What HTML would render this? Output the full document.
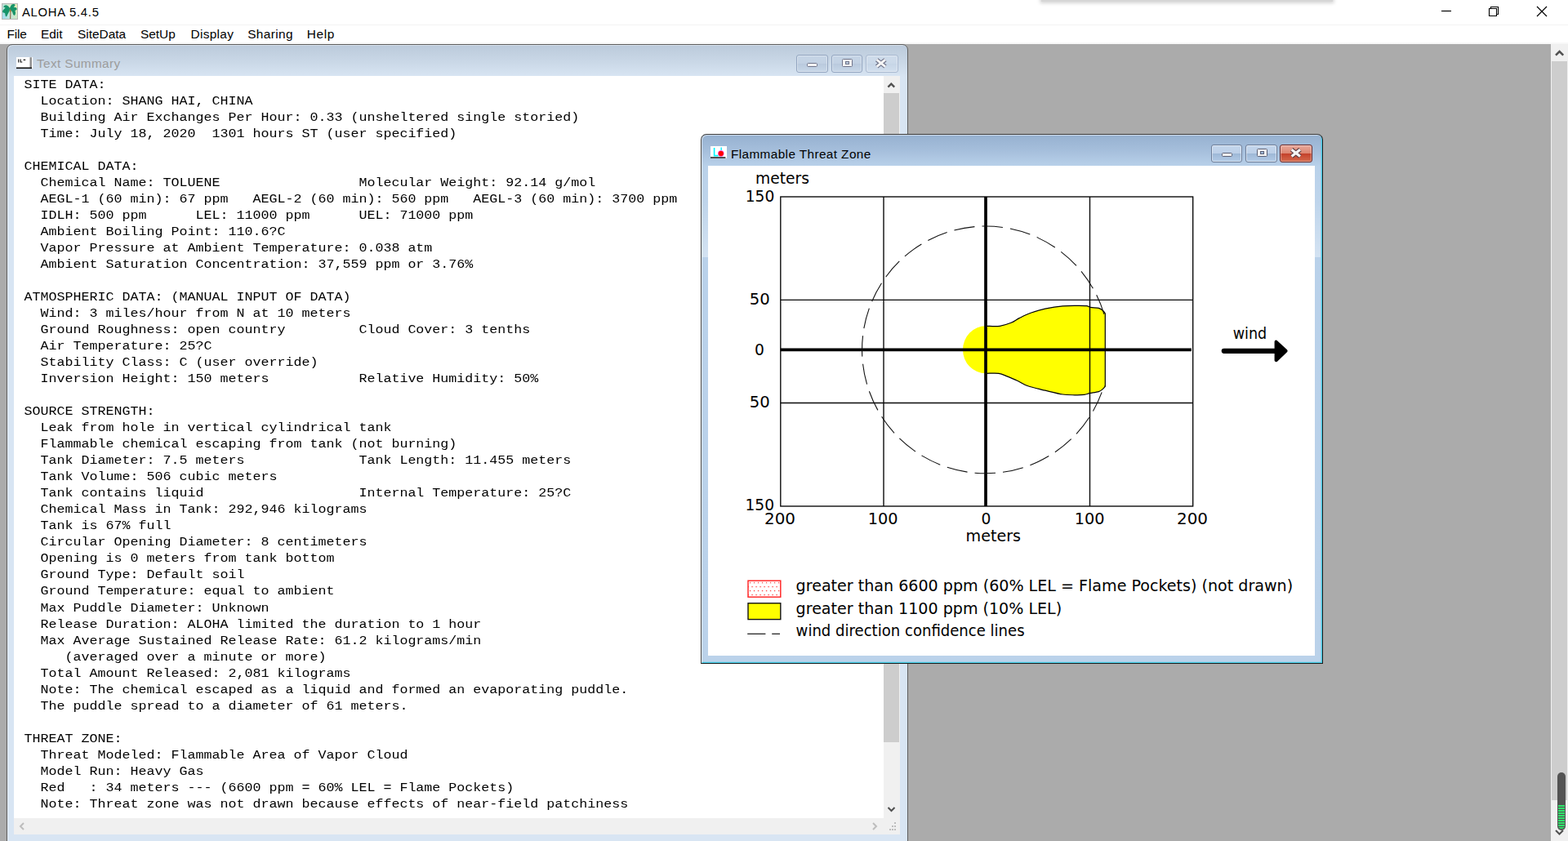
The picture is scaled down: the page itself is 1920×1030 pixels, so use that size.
<!DOCTYPE html>
<html lang="en">
<head>
<meta charset="utf-8">
<title>ALOHA 5.4.5</title>
<style>
html,body{margin:0;padding:0;}
body{width:1920px;height:1030px;overflow:hidden;background:#fff;position:relative;font-family:"Liberation Sans",sans-serif;color:#000;}
.abs{position:absolute;}
#titlebar{left:0;top:0;width:1920px;height:30px;background:#fff;}
#apptitle{left:27px;top:4.5px;font-size:14.8px;line-height:20px;white-space:nowrap;letter-spacing:0.75px;}
#menubar{left:0;top:30px;width:1920px;height:24px;background:linear-gradient(#fff 0,#fff 20px,#f1f1f1 24px);border-top:1px solid #f3f3f3;box-sizing:border-box;}
#menubar span{position:absolute;top:0.6px;font-size:15.4px;line-height:20px;white-space:nowrap;}
#mdi{left:0;top:54px;width:1899px;height:976px;background:#ababab;}
#mainsb{left:1899px;top:54px;width:21px;height:976px;background:#f0f0f0;}
/* text summary window */
#tswin{left:7.5px;top:54px;width:1104.5px;height:990px;box-sizing:border-box;border:1.4px solid #5e5e5e;border-top-width:1.2px;border-radius:7px 7px 0 0;box-shadow:inset 1px 1px 0 rgba(255,255,255,.4);background:linear-gradient(#bbcadb 0px,#c9d7e6 20px,#d8e5f3 39px,#d8e5f3 100%);}
#tstitle{left:36.5px;top:13px;font-size:15.3px;line-height:20px;color:#9c9c9c;white-space:nowrap;letter-spacing:0.4px;}
#tscontent{left:8.6px;top:37.8px;width:1065.2px;height:909px;background:#fff;overflow:hidden;}
#tstext{position:absolute;left:12.5px;top:1px;margin:0;font-family:"Liberation Mono",monospace;font-size:16.667px;line-height:22.01px;white-space:pre;color:#000;transform:scaleY(0.90909);transform-origin:0 0;}
#tsvsb{left:1073.8px;top:37.8px;width:19.5px;height:909px;background:#f0f0f0;}
#tshsb{left:8.6px;top:946.8px;width:1084.7px;height:20px;background:#f0f0f0;}
.cbtn{position:absolute;box-sizing:border-box;border-radius:3px;}
/* flammable window */
#fzwin{left:857.5px;top:164px;width:762.5px;height:649px;box-sizing:border-box;border:1.5px solid #1c1c1c;border-top:1.2px solid #3c3c3c;border-left-color:#444;border-radius:7px 7px 0 0;background:linear-gradient(#96b1d0 0px,#a6bfdc 20px,#b9d1ea 39px,#bbd2ea 100%);box-shadow:inset 1px 1px 0 rgba(255,255,255,.55),inset -1.3px -1.3px 0 #46cde6;}
#fztitle{left:36.4px;top:13.5px;font-size:15.3px;line-height:20px;white-space:nowrap;letter-spacing:0.42px;}
#fzcontent{left:8.5px;top:37.8px;width:742.5px;height:600.2px;background:#fff;overflow:hidden;}
</style>
</head>
<body>
<div id="titlebar" class="abs">
  <svg class="abs" style="left:2px;top:4px" width="20" height="20" viewBox="0 0 20 20">
    <defs>
      <linearGradient id="icT" x1="0" y1="0" x2="1" y2="0"><stop offset="0" stop-color="#b4e0dc"/><stop offset="0.55" stop-color="#d6ecc8"/><stop offset="1" stop-color="#e8efb4"/></linearGradient>
      <linearGradient id="icB" x1="0" y1="0" x2="1" y2="0"><stop offset="0" stop-color="#9ddaf2"/><stop offset="0.5" stop-color="#bfe6dc"/><stop offset="1" stop-color="#d0e9c4"/></linearGradient>
      <linearGradient id="icM" x1="0" y1="0" x2="0" y2="1"><stop offset="0.3" stop-color="#000"/><stop offset="0.8" stop-color="#fff"/></linearGradient>
      <mask id="icMask"><rect x="0" y="0" width="20" height="20" fill="url(#icM)"/></mask>
    </defs>
    <rect x="0" y="0" width="20" height="20" fill="url(#icT)"/>
    <rect x="0" y="0" width="20" height="20" fill="url(#icB)" mask="url(#icMask)"/>
    <rect x="0.5" y="0.5" width="19" height="19" fill="none" stroke="#b9b9b9" stroke-width="1"/>
    <path d="M10.4 9 L10 19 L11.2 19 L11.5 9 Z" fill="#8f6a4c"/>
    <path d="M9.3 6.2 C9.3 5.4 11.6 5.4 11.6 6.4 L11.4 10.5 L9.8 10.5 Z" fill="#b07235"/>
    <path d="M10 6.2 C9.4 5 8.2 3.4 7.2 3 C6 2 4.6 2 3.6 2.8 C2.8 3.4 2.2 4 2.1 4.6 C3.2 4.8 4 5.2 4.6 5.8 C3.4 6.6 1.8 8.2 1 9.8 C1.2 10.6 1.4 11.2 1.6 11.6 C2.6 11.4 3.4 11.6 4.2 12.2 C4.2 13.6 4.6 15.4 5.2 16.4 C5.8 16.2 6.2 16 6.6 15.6 C7 14 8 12.4 8.8 11 C9.2 10.2 9.6 9.4 9.8 8.8 Z" fill="#17946a"/>
    <path d="M10 6 C10.6 4.4 11.4 2.6 12.4 1.6 C13.6 1 15 0.9 15.9 1.3 C16.5 1.9 16.5 2.6 16.3 3 C15.7 3.6 15.1 4.2 14.6 4.7 C16 4.8 17.2 5 18.1 5.5 C18.6 6.2 18.8 7 18.6 7.7 C17.8 8.2 17 8.7 16.4 9 C16.9 10.2 17.1 11.2 17 12.2 C16.8 13.4 16.4 14.4 15.8 15.1 C15.1 14.7 14.5 14.1 14 13.4 C13.6 12 13 10.6 12.3 9.6 C11.9 9.1 11.5 8.8 11.1 8.5 Z" fill="#17946a"/>
  </svg>
  <div id="apptitle" class="abs">ALOHA 5.4.5</div>
  <svg class="abs" style="left:1750px;top:0" width="170" height="30" viewBox="0 0 170 30">
    <path d="M15 13.5 H27" stroke="#000" stroke-width="1.2" fill="none"/>
    <path d="M73.5 10.5 H82.5 V19.5 H73.5 Z M75.5 10.5 V8.5 H84.5 V17.5 H82.5" stroke="#000" stroke-width="1.1" fill="none"/>
    <path d="M132 8 L144 20 M144 8 L132 20" stroke="#000" stroke-width="1.2" fill="none"/>
  </svg>
  <div class="abs" style="left:1275px;top:-6px;width:357px;height:7.7px;background:#d6d6d6;box-shadow:0 0.5px 4px 1.5px rgba(0,0,0,0.17);"></div>
</div>
<div id="menubar" class="abs">
  <span style="left:8.6px;letter-spacing:-0.2px">File</span>
  <span style="left:50px">Edit</span>
  <span style="left:95px">SiteData</span>
  <span style="left:172px">SetUp</span>
  <span style="left:233.6px;letter-spacing:0.3px">Display</span>
  <span style="left:303.2px;letter-spacing:0.4px">Sharing</span>
  <span style="left:375.8px;letter-spacing:0.6px">Help</span>
</div>
<div id="mdi" class="abs"></div>
<div id="mainsb" class="abs">
  <div class="abs" style="left:1px;top:21px;width:19px;height:905px;background:#cdcdcd;"></div>
  <svg class="abs" style="left:0;top:0" width="21" height="21" viewBox="0 0 21 21"><path d="M6 13.6 L10.6 9 L15.2 13.6" stroke="#505050" stroke-width="2.5" fill="none"/></svg>
  <svg class="abs" style="left:0;top:955px" width="21" height="21" viewBox="0 0 21 21"><path d="M6 8 L10.5 12.5 L15 8" stroke="#505050" stroke-width="2" fill="none"/></svg>
  <div class="abs" style="left:8px;top:892px;width:10px;height:71px;background:#535353;border-radius:5px;"></div>
  <div class="abs" style="left:9px;top:932px;width:8px;height:29px;background:repeating-linear-gradient(#30e36b 0px,#30e36b 2px,#535353 2px,#535353 3px);border-radius:0 0 4px 4px;"></div>
</div>

<!-- TEXT SUMMARY WINDOW -->
<div id="tswin" class="abs">
  <svg class="abs" style="left:11px;top:15px" width="21" height="15" viewBox="0 0 21 15">
    <rect x="0" y="0" width="20.2" height="14" fill="#fff"/>
    <rect x="16.5" y="0.2" width="2.4" height="12.6" fill="#8c8c8c"/>
    <rect x="0" y="12.5" width="19" height="1.6" fill="#0c0c0c"/>
    <path d="M2.2 2.6 h1.1 v3.8 h-1.1 z M4.6 2.6 h1.1 v2.8 h1.6 v1 h-2.7 z M8.6 2.8 h2.6 v1.1 h-2.6 z" fill="#111"/>
  </svg>
  <div id="tstitle" class="abs">Text Summary</div>
  <div id="tscontent" class="abs"><pre id="tstext">SITE DATA<span>:</span>
  Location: SHANG HAI, CHINA
  Building Air Exchanges Per Hour: 0.33 (unsheltered single storied)
  Time: July 18, 2020  1301 hours ST (user specified)

CHEMICAL DATA<span>:</span>
  Chemical Name: TOLUENE                 Molecular Weight: 92.14 g/mol
  AEGL-1 (60 min): 67 ppm   AEGL-2 (60 min): 560 ppm   AEGL-3 (60 min): 3700 ppm
  IDLH: 500 ppm      LEL: 11000 ppm      UEL: 71000 ppm
  Ambient Boiling Point: 110.6?C
  Vapor Pressure at Ambient Temperature: 0.038 atm
  Ambient Saturation Concentration: 37,559 ppm or 3.76%

ATMOSPHERIC DATA<span>:</span> (MANUAL INPUT OF DATA)
  Wind: 3 miles/hour from N at 10 meters
  Ground Roughness: open country         Cloud Cover: 3 tenths
  Air Temperature: 25?C
  Stability Class: C (user override)
  Inversion Height: 150 meters           Relative Humidity: 50%

SOURCE STRENGTH:
  Leak from hole in vertical cylindrical tank
  Flammable chemical escaping from tank (not burning)
  Tank Diameter: 7.5 meters              Tank Length: 11.455 meters
  Tank Volume: 506 cubic meters
  Tank contains liquid                   Internal Temperature: 25?C
  Chemical Mass in Tank: 292,946 kilograms
  Tank is 67% full
  Circular Opening Diameter: 8 centimeters
  Opening is 0 meters from tank bottom
  Ground Type: Default soil
  Ground Temperature: equal to ambient
  Max Puddle Diameter: Unknown
  Release Duration: ALOHA limited the duration to 1 hour
  Max Average Sustained Release Rate: 61.2 kilograms/min
     (averaged over a minute or more)
  Total Amount Released: 2,081 kilograms
  Note: The chemical escaped as a liquid and formed an evaporating puddle.
  The puddle spread to a diameter of 61 meters.

THREAT ZONE:
  Threat Modeled: Flammable Area of Vapor Cloud
  Model Run: Heavy Gas
  Red   : 34 meters --- (6600 ppm = 60% LEL = Flame Pockets)
  Note: Threat zone was not drawn because effects of near-field patchiness</pre></div>
  <div id="tsvsb" class="abs">
    <div class="abs" style="left:0;top:21px;width:18.3px;height:795.5px;background:#cdcdcd;"></div>
    <svg class="abs" style="left:0;top:0" width="19" height="21" viewBox="0 0 19 21"><path d="M5.4 13.6 L9.3 9.7 L13.2 13.6" stroke="#505050" stroke-width="2.3" fill="none"/></svg>
    <svg class="abs" style="left:0;top:888px" width="19" height="21" viewBox="0 0 19 21"><path d="M5.5 8 L9.5 12 L13.5 8" stroke="#505050" stroke-width="2" fill="none"/></svg>
  </div>
  <div id="tshsb" class="abs">
    <svg class="abs" style="left:0;top:0" width="21" height="20" viewBox="0 0 21 20"><path d="M12 6 L8 10 L12 14" stroke="#bdbdbd" stroke-width="2" fill="none"/></svg>
    <svg class="abs" style="left:1044px;top:0" width="21" height="20" viewBox="0 0 21 20"><path d="M8 6 L12 10 L8 14" stroke="#bdbdbd" stroke-width="2" fill="none"/></svg>
    <svg class="abs" style="left:1065px;top:0" width="19" height="20" viewBox="0 0 19 20"><path d="M13 5h2v2h-2z M10 9h2v2h-2z M13 9h2v2h-2z M7 13h2v2h-2z M10 13h2v2h-2z M13 13h2v2h-2z" fill="#bdbdbd"/></svg>
  </div>
  <!-- caption buttons (inactive) -->
  <div class="cbtn" style="left:966.5px;top:11.8px;width:39px;height:22px;border:1px solid #93a5c0;background:linear-gradient(#c6d5e6 0,#c2d1e3 50%,#b9c9dd 50%,#c8d7e8 100%);box-shadow:inset 0 0 0 1px rgba(255,255,255,.35);"></div>
  <div class="cbtn" style="left:1009.1px;top:11.8px;width:38.7px;height:22px;border:1px solid #93a5c0;background:linear-gradient(#c6d5e6 0,#c2d1e3 50%,#b9c9dd 50%,#c8d7e8 100%);box-shadow:inset 0 0 0 1px rgba(255,255,255,.35);"></div>
  <div class="cbtn" style="left:1051.1px;top:11.8px;width:40px;height:22px;border:1px solid #a9b9d0;background:linear-gradient(#cfdceb 0,#cbd9e9 50%,#c6d5e6 50%,#d2dfee 100%);box-shadow:inset 0 0 0 1px rgba(255,255,255,.35);"></div>
  <svg class="abs" style="left:966px;top:12px" width="126" height="22" viewBox="0 0 126 22">
    <rect x="13.5" y="10.5" width="12" height="4" rx="1" fill="#f4f4f4" stroke="#70748a" stroke-width="1"/>
    <rect x="56.5" y="5.5" width="12" height="9" rx="1" fill="#f4f4f4" stroke="#70748a" stroke-width="1"/>
    <rect x="60.5" y="8.5" width="4" height="3" fill="#b9c9dd" stroke="#70748a" stroke-width="1"/>
    <path d="M98.6 6.2 L109 14.6 M109 6.2 L98.6 14.6" stroke="#6e7288" stroke-width="5.2" fill="none"/>
    <path d="M98.6 6.2 L109 14.6 M109 6.2 L98.6 14.6" stroke="#f6f6f6" stroke-width="2.8" fill="none"/>
  </svg>
</div>

<!-- FLAMMABLE THREAT ZONE WINDOW -->
<div id="fzwin" class="abs">
  <svg class="abs" style="left:11px;top:14.2px" width="20" height="15" viewBox="0 0 20 15">
    <rect x="0" y="0" width="20" height="14.7" fill="#fff"/>
    <path d="M4.6 2 V11.6 H9.6" stroke="#00f4ff" stroke-width="1.6" fill="none"/>
    <path d="M13.2 1.6 V5" stroke="#18e8ff" stroke-width="1.5" fill="none"/>
    <circle cx="12.8" cy="9" r="3.7" fill="#ff40e0"/>
    <circle cx="12.8" cy="9" r="3.1" fill="#ff0000"/>
    <path d="M0 14 H18.4" stroke="#0a0a0a" stroke-width="1.4" fill="none"/>
  </svg>
  <div id="fztitle" class="abs">Flammable Threat Zone</div>
  <div class="cbtn" style="left:624px;top:11.8px;width:38.6px;height:22px;border:1px solid #6f7f9a;background:linear-gradient(#c4d6ec 0,#bdd0e8 48%,#9db7d6 50%,#b3cbe6 100%);box-shadow:inset 0 0 0 1px rgba(255,255,255,.45);"></div>
  <div class="cbtn" style="left:666.2px;top:11.8px;width:39.2px;height:22px;border:1px solid #6f7f9a;background:linear-gradient(#c4d6ec 0,#bdd0e8 48%,#9db7d6 50%,#b3cbe6 100%);box-shadow:inset 0 0 0 1px rgba(255,255,255,.45);"></div>
  <div class="cbtn" style="left:708.5px;top:11.8px;width:39.8px;height:22px;border:1px solid #6b2b2b;background:linear-gradient(#e9a99b 0,#dc8672 48%,#c4402a 50%,#d46b4e 100%);box-shadow:inset 0 0 0 1px rgba(255,255,255,.35);"></div>
  <svg class="abs" style="left:624px;top:12px" width="126" height="22" viewBox="0 0 126 22">
    <rect x="13.5" y="10.5" width="12" height="4" rx="1" fill="#f4f4f4" stroke="#5c6075" stroke-width="1"/>
    <rect x="56.5" y="5.5" width="12" height="9" rx="1" fill="#f4f4f4" stroke="#5c6075" stroke-width="1"/>
    <rect x="60.5" y="8.5" width="4" height="3" fill="#9db7d6" stroke="#5c6075" stroke-width="1"/>
    <path d="M98.6 6.2 L109 14.6 M109 6.2 L98.6 14.6" stroke="#5a3a40" stroke-width="5.4" fill="none"/>
    <path d="M98.6 6.2 L109 14.6 M109 6.2 L98.6 14.6" stroke="#f4f4f4" stroke-width="3.2" fill="none"/>
  </svg>
  <div class="abs" style="left:1px;top:38px;width:8px;height:112px;background:linear-gradient(rgba(255,255,255,0) 0%,rgba(255,255,255,.08) 40%,rgba(255,255,255,.38) 100%);"></div>
  <div class="abs" style="left:751px;top:38px;width:7px;height:112px;background:linear-gradient(rgba(255,255,255,0) 0%,rgba(255,255,255,.08) 40%,rgba(255,255,255,.38) 100%);"></div>
  <div id="fzcontent" class="abs">
  <!-- CHART-START --><svg class="abs" style="left:0;top:0" width="742.5" height="600.2" viewBox="867 203 742.5 600.2">
    <defs>
      <pattern id="dots" x="916.1" y="711.2" width="5" height="9.9" patternUnits="userSpaceOnUse">
        <rect x="1.85" y="1.85" width="1.3" height="1.3" fill="#ff2a2a"/>
        <rect x="-0.65" y="6.8" width="1.3" height="1.3" fill="#ff2a2a"/>
        <rect x="4.35" y="6.8" width="1.3" height="1.3" fill="#ff2a2a"/>
      </pattern>
    </defs>
    <g font-family="DejaVu Sans, Liberation Sans, sans-serif" font-size="18.67" fill="#000">
      <text x="925" y="225.2" textLength="66" lengthAdjust="spacingAndGlyphs">meters</text>
      <text x="930.5" y="246.7" text-anchor="middle">150</text>
      <text x="930.2" y="373" text-anchor="middle" textLength="25" lengthAdjust="spacingAndGlyphs">50</text>
      <text x="930" y="435.1" text-anchor="middle">0</text>
      <text x="930.2" y="499" text-anchor="middle" textLength="25" lengthAdjust="spacingAndGlyphs">50</text>
      <text x="930.3" y="624.9" text-anchor="middle">150</text>
      <text x="955" y="641.7" text-anchor="middle" textLength="38" lengthAdjust="spacingAndGlyphs">200</text>
      <text x="1081.2" y="641.7" text-anchor="middle" textLength="36.8" lengthAdjust="spacingAndGlyphs">100</text>
      <text x="1207.5" y="641.7" text-anchor="middle">0</text>
      <text x="1334.2" y="641.7" text-anchor="middle" textLength="36.8" lengthAdjust="spacingAndGlyphs">100</text>
      <text x="1460" y="641.7" text-anchor="middle" textLength="38" lengthAdjust="spacingAndGlyphs">200</text>
      <text x="1182.6" y="663" textLength="67.4" lengthAdjust="spacingAndGlyphs">meters</text>
      <text x="1509.7" y="415.2" textLength="41.5" lengthAdjust="spacingAndGlyphs">wind</text>
      <text x="974.6" y="723.8" textLength="608.5" lengthAdjust="spacingAndGlyphs">greater than 6600 ppm (60% LEL = Flame Pockets) (not drawn)</text>
      <text x="974.6" y="751.7" textLength="325.6" lengthAdjust="spacingAndGlyphs">greater than 1100 ppm (10% LEL)</text>
      <text x="974.6" y="779" textLength="280" lengthAdjust="spacingAndGlyphs">wind direction confidence lines</text>
    </g>
    <!-- yellow zone -->
    <path d="M1208.5 399.3 C1211.1 399.3 1219.4 400.0 1224.3 399.3 C1229.2 398.6 1234.1 396.9 1238.1 395.3 C1242.1 393.7 1244.2 391.6 1248.2 389.6 C1252.2 387.6 1256.8 385.2 1262.1 383.3 C1267.4 381.4 1273.3 379.6 1279.8 378.2 C1286.3 376.8 1294.8 375.4 1301.2 374.8 C1307.6 374.2 1313.2 374.3 1318.0 374.3 C1322.8 374.3 1327.4 374.2 1330.3 374.6 C1333.2 375.0 1332.8 375.9 1335.3 376.4 C1337.8 376.9 1342.9 376.7 1345.4 377.4 C1347.9 378.1 1349.2 379.4 1350.5 380.5 C1351.8 381.6 1352.8 383.3 1353.3 383.9 L1353.3 473.2 C1352.8 473.8 1351.5 475.5 1350.2 476.6 C1348.9 477.7 1348.0 478.8 1345.4 479.6 C1342.8 480.4 1337.5 481.0 1334.5 481.6 C1331.5 482.2 1330.8 483.0 1327.7 483.4 C1324.6 483.8 1320.4 483.9 1316.0 483.8 C1311.6 483.7 1307.2 483.9 1301.2 483.0 C1295.2 482.1 1286.9 479.9 1279.8 478.2 C1272.7 476.5 1264.5 474.8 1258.8 472.8 C1253.1 470.8 1250.0 468.2 1245.7 466.2 C1241.4 464.2 1236.9 462.4 1233.1 460.9 C1229.3 459.4 1227.1 457.9 1223.0 457.3 C1218.9 456.7 1210.9 457.3 1208.5 457.3 L1207 457.3 A28 29 0 0 1 1207 399.3 Z" fill="#ffff00"/>
    <path d="M1208.5 399.3 C1211.1 399.3 1219.4 400.0 1224.3 399.3 C1229.2 398.6 1234.1 396.9 1238.1 395.3 C1242.1 393.7 1244.2 391.6 1248.2 389.6 C1252.2 387.6 1256.8 385.2 1262.1 383.3 C1267.4 381.4 1273.3 379.6 1279.8 378.2 C1286.3 376.8 1294.8 375.4 1301.2 374.8 C1307.6 374.2 1313.2 374.3 1318.0 374.3 C1322.8 374.3 1327.4 374.2 1330.3 374.6 C1333.2 375.0 1332.8 375.9 1335.3 376.4 C1337.8 376.9 1342.9 376.7 1345.4 377.4 C1347.9 378.1 1349.2 379.4 1350.5 380.5 C1351.8 381.6 1352.8 383.3 1353.3 383.9 L1353.3 473.2 C1352.8 473.8 1351.5 475.5 1350.2 476.6 C1348.9 477.7 1348.0 478.8 1345.4 479.6 C1342.8 480.4 1337.5 481.0 1334.5 481.6 C1331.5 482.2 1330.8 483.0 1327.7 483.4 C1324.6 483.8 1320.4 483.9 1316.0 483.8 C1311.6 483.7 1307.2 483.9 1301.2 483.0 C1295.2 482.1 1286.9 479.9 1279.8 478.2 C1272.7 476.5 1264.5 474.8 1258.8 472.8 C1253.1 470.8 1250.0 468.2 1245.7 466.2 C1241.4 464.2 1236.9 462.4 1233.1 460.9 C1229.3 459.4 1227.1 457.9 1223.0 457.3 C1218.9 456.7 1210.9 457.3 1208.5 457.3" fill="none" stroke="#000" stroke-width="1.2"/>
    <!-- grid -->
    <g stroke="#0a0a0a" stroke-width="1.38" fill="none">
      <rect x="955.8" y="241" width="504.9" height="379"/>
      <path d="M1082 241 V620 M1334.5 241 V620 M955.8 367.4 H1460.7 M955.8 493.5 H1460.7"/>
    </g>
    <path d="M1207 241 V620" stroke="#000" stroke-width="3.7" fill="none"/>
    <path d="M955.8 428.4 H1458.9" stroke="#000" stroke-width="3.7" fill="none"/>
    <!-- confidence circle -->
    <path d="M1353.3 383.9 L1351.8 384.3 A151.4 151.4 0 1 0 1351.8 472.5 L1353.3 473.2" fill="none" stroke="#111" stroke-width="1.1" stroke-dasharray="25.4 9.1" stroke-dashoffset="-1"/>
    <!-- wind arrow -->
    <path d="M1498.8 429.8 H1560.8" stroke="#000" stroke-width="6.2" stroke-linecap="round" fill="none"/>
    <path d="M1562.6 418.6 L1574.6 429.8 L1562.6 441.2 Z" fill="#000" stroke="#000" stroke-width="4" stroke-linejoin="round"/>
    <!-- legend -->
    <rect x="916" y="711.2" width="39.8" height="20" fill="#fff"/>
    <rect x="916" y="711.2" width="39.8" height="20" fill="url(#dots)" stroke="#ff1c1c" stroke-width="1.4"/>
    <rect x="916" y="738.8" width="39.8" height="19.8" fill="#ffff00" stroke="#111" stroke-width="1.4"/>
    <path d="M915.2 776.3 H937.4 M945.2 776.3 H955" stroke="#222" stroke-width="1.2" fill="none"/>
  </svg><!-- CHART-END -->
  </div>
</div>
</body>
</html>
